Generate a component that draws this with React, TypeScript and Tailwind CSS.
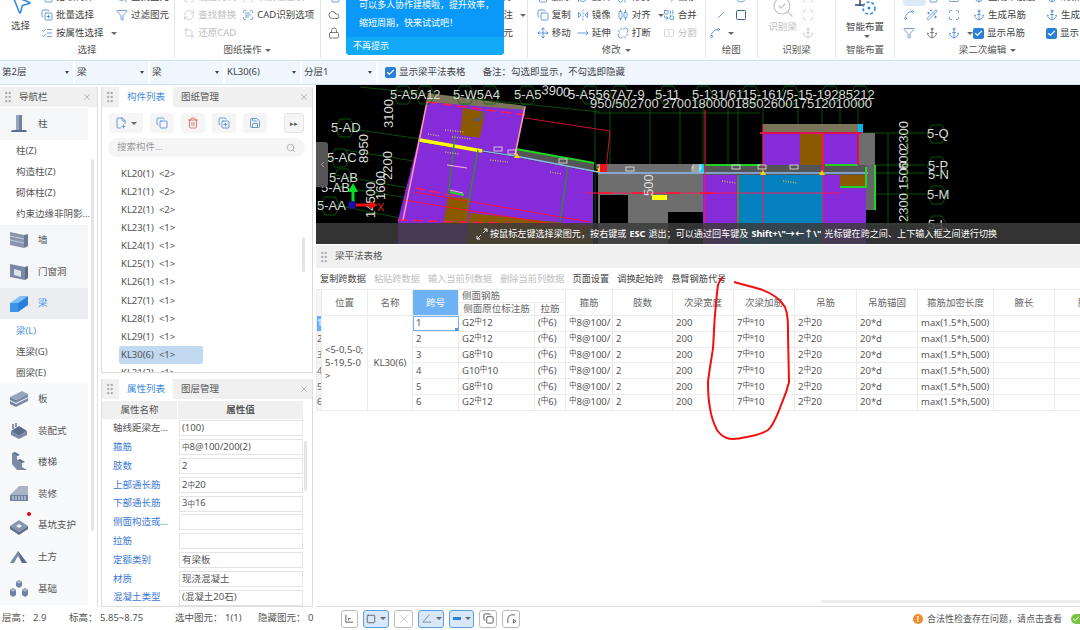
import type { ReactElement, ReactNode } from 'react';
import {
  AlignHorizontalDistributeCenter,
  ArrowLeftRight,
  Check,
  ChevronLeft,
  Circle,
  Cloud,
  Combine,
  Copy,
  CopyPlus,
  Crop,
  Filter,
  FlipHorizontal2,
  GripVertical,
  ListChecks,
  Lock,
  MousePointer2,
  Move,
  Scan,
  ScanText,
  Search,
  SearchCheck,
  Spline,
  Square,
  SquareSplitHorizontal,
  Trash2,
  Unlink,
  X,
  Save,
  FilePlus2,
  Minus,
  MoveRight,
  RefreshCw,
  Anchor,
  Wand2,
} from 'lucide-react';

const FONT = "font-['Noto_Sans','Noto_Sans_CJK_SC',sans-serif]";

function Rebar(): ReactElement {
  return <span className="align-[2px] text-[7.5px] leading-[8px]">中</span>;
}

function Caret(): ReactElement {
  return <span className="ml-1 inline-block h-0 w-0 border-x-[3px] border-t-[3px] border-x-transparent border-t-[#666]" />;
}

function Tool({ icon, label, off, caret }: { icon: ReactNode; label?: string; off?: boolean; caret?: boolean }): ReactElement {
  return (
    <div className={`flex h-[18px] items-center gap-[3px] whitespace-nowrap text-[9.5px] ${off ? 'text-[#bdbdbd]' : 'text-[#444]'}`}>
      {icon}
      {label}
      {caret ? <Caret /> : null}
    </div>
  );
}

function Group({ width, label, caret, children }: { width: string; label: string; caret?: boolean; children: ReactNode }): ReactElement {
  return (
    <div className={`flex h-[58px] flex-col border-r border-[#e6e6e6] ${width}`}>
      <div className="h-[43px] overflow-hidden">{children}</div>
      <div className="flex h-[15px] items-center justify-center text-[9.5px] text-[#555]">
        {label}
        {caret ? <Caret /> : null}
      </div>
    </div>
  );
}

const ic = 'h-[12px] w-[12px] shrink-0 stroke-[1.5] text-[#3f7fd0]';
const icOff = 'h-[12px] w-[12px] shrink-0 stroke-[1.5] text-[#c4c4c4]';

function Ribbon(): ReactElement {
  return (
    <div className="flex h-[60px] bg-white">
      <Group width="w-[176px]" label="选择">
        <div className="flex">
          <div className="flex w-[41px] flex-col items-center">
            <MousePointer2 className="-mt-[8px] ml-[1px] h-[24px] w-[24px] stroke-[1.5] text-[#2f86e0]" />
            <span className="mt-[3px] text-[9.5px] text-[#444]">选择</span>
          </div>
          <div className="-mt-[12px] w-[75px]">
            <Tool icon={<Copy className={ic} />} label="拾取构件" />
            <Tool icon={<CopyPlus className={ic} />} label="批量选择" />
            <Tool icon={<ListChecks className={ic} />} label="按属性选择" caret />
          </div>
          <div className="-mt-[12px]">
            <Tool icon={<Search className={ic} />} label="查找图元" />
            <Tool icon={<Filter className={ic} />} label="过滤图元" />
          </div>
        </div>
      </Group>
      <Group width="w-[146px]" label="图纸操作" caret>
        <div className="-mt-[12px] flex pl-2">
          <div className="w-[59px]">
            <Tool off icon={<Scan className={icOff} />} label="设置比例" />
            <Tool off icon={<RefreshCw className={icOff} />} label="查找替换" />
            <Tool off icon={<Crop className={icOff} />} label="还原CAD" />
          </div>
          <div>
            <Tool off icon={<Scan className={icOff} />} label="识别楼层表" />
            <Tool icon={<ScanText className={ic} />} label="CAD识别选项" />
          </div>
        </div>
      </Group>
      <Group width="w-[208px]" label="">
        <div className="-mt-[12px] flex pl-[7px]">
          <div className="w-[176px]">
            <Tool icon={<Copy className={ic} />} />
            <Tool icon={<Cloud className="h-[12px] w-[12px] stroke-[1.5] text-[#555]" />} />
            <Tool icon={<Lock className="h-[12px] w-[12px] stroke-[1.5] text-[#555]" />} />
          </div>
          <div>
            <Tool icon={null} label="除" />
            <Tool icon={null} label="注" caret />
            <Tool icon={null} label="元" />
          </div>
        </div>
      </Group>
      <Group width="w-[179px]" label="修改" caret>
        <div className="-mt-[12px] grid grid-cols-[40px_40px_46px_40px] pl-[9px]">
          <Tool icon={<Trash2 className={ic} />} label="删除" />
          <Tool icon={<RefreshCw className={ic} />} label="旋转" />
          <Tool icon={<Unlink className={ic} />} label="修剪" />
          <Tool icon={<ArrowLeftRight className={ic} />} label="偏移" />
          <Tool icon={<Copy className={ic} />} label="复制" />
          <Tool icon={<FlipHorizontal2 className={ic} />} label="镜像" />
          <Tool icon={<AlignHorizontalDistributeCenter className={ic} />} label="对齐" caret />
          <Tool icon={<Combine className={ic} />} label="合并" />
          <Tool icon={<Move className={ic} />} label="移动" />
          <Tool icon={<MoveRight className={ic} />} label="延伸" />
          <Tool icon={<Unlink className={ic} />} label="打断" />
          <Tool off icon={<SquareSplitHorizontal className={icOff} />} label="分割" />
        </div>
      </Group>
      <Group width="w-[52px]" label="绘图">
        <div className="-mt-[12px] grid grid-cols-2 justify-items-center px-[5px]">
          <Tool icon={<Minus className={`${ic} -rotate-45`} />} />
          <Tool icon={<Circle className={ic} />} />
          <Tool icon={<Minus className={`${ic} -rotate-45`} />} />
          <Tool icon={<Square className="h-[12px] w-[12px] stroke-[2] text-[#3a5f96]" />} />
          <Tool icon={<Spline className={ic} />} caret />
        </div>
      </Group>
      <Group width="w-[79px]" label="识别梁">
        <div className="flex pl-[6px]">
          <div className="flex w-[38px] flex-col items-center text-[9.5px] text-[#bdbdbd]">
            <SearchCheck className="-mt-[5px] h-[24px] w-[24px] stroke-[1.2] text-[#c4c4c4]" />
            <span className="mt-[1px]">识别梁</span>
          </div>
          <div className="-mt-[12px]">
            <Tool off icon={<Scan className={icOff} />} />
            <Tool off icon={<Scan className={icOff} />} />
            <Tool off icon={<Anchor className={icOff} />} />
          </div>
        </div>
      </Group>
      <Group width="w-[59px]" label="智能布置">
        <div className="flex flex-col items-center text-[9.5px] text-[#444]">
          <svg viewBox="0 0 24 24" className="-mt-[8px] h-[24px] w-[24px]" fill="none">
            <path d="M2 6h20M2 13h9M7 1v13M15 1v7" stroke="#3a4a66" strokeWidth="1.5" />
            <circle cx="16" cy="16" r="6" stroke="#2f86e0" strokeWidth="1.5" strokeDasharray="3 2" />
            <circle cx="16" cy="16" r="1.5" fill="#2f86e0" />
          </svg>
          <span className="mt-[2px] leading-[17px]">智能布置</span>
          <Caret />
        </div>
      </Group>
      <Group width="flex-1 border-r-0" label="梁二次编辑" caret>
        <div className="-mt-[12px] flex pl-[8px]">
          <div className="grid w-[68px] grid-cols-3">
            <div className="h-[18px] w-[23px] rounded-sm bg-[#dce9f7]" />
            <Tool icon={<Copy className={ic} />} />
            <Tool icon={<Square className={ic} />} />
            <Tool icon={<Spline className={ic} />} />
            <Tool icon={<Wand2 className={ic} />} />
            <Tool icon={<Scan className={ic} />} />
            <Tool icon={<Filter className={ic} />} />
            <Tool icon={<Anchor className="h-[12px] w-[12px] stroke-[1.5] text-[#555]" />} />
            <Tool icon={<Anchor className={ic} />} caret />
          </div>
          <div className="w-[75px] pl-[2px]">
            <Tool icon={<Anchor className={ic} />} label="生成吊筋筋" />
            <Tool icon={<Anchor className={ic} />} label="生成吊筋" />
            <CheckLabel label="显示吊筋" />
          </div>
          <div>
            <Tool icon={<Anchor className={ic} />} label="刷新" />
            <Tool icon={<Anchor className={ic} />} label="生成" />
            <CheckLabel label="显示" />
          </div>
        </div>
      </Group>
    </div>
  );
}

function CheckLabel({ label }: { label: string }): ReactElement {
  return (
    <div className="flex h-[18px] items-center gap-[3px] whitespace-nowrap text-[9.5px] text-[#444]">
      <span className="flex h-[11px] w-[11px] items-center justify-center rounded-[2px] bg-[#2a7fd8]">
        <Check className="h-[9px] w-[9px] stroke-[3] text-white" />
      </span>
      {label}
    </div>
  );
}

function Dropdown({ value, width }: { value: string; width: string }): ReactElement {
  return (
    <div className={`flex h-full items-center justify-between border-r-2 border-white pl-[2px] pr-[4px] text-[9.5px] text-[#444] ${width}`}>
      {value}
      <span className="h-0 w-0 border-x-[2.5px] border-t-[3px] border-x-transparent border-t-[#444]" />
    </div>
  );
}

function OptionBar(): ReactElement {
  return (
    <div className="flex h-[25px] items-center border-y border-[#cfe2f3] bg-[#eff7fd]">
      <Dropdown value="第2层" width="w-[75px]" />
      <Dropdown value="梁" width="w-[75px]" />
      <Dropdown value="梁" width="w-[75px]" />
      <Dropdown value="KL30(6)" width="w-[77px]" />
      <Dropdown value="分层1" width="w-[76px]" />
      <div className="ml-[7px]">
        <CheckLabel label="显示梁平法表格" />
      </div>
      <span className="ml-[17px] text-[9.5px] text-[#444]">备注：勾选即显示，不勾选即隐藏</span>
    </div>
  );
}

function PanelHead({ tabs }: { tabs: string[] }): ReactElement {
  return (
    <div className="flex h-[20px] items-center bg-[#f0f0f0] text-[9.5px]">
      <GripVertical className="ml-[1px] h-[14px] w-[14px] text-[#aaa]" />
      <div className="ml-[2px] flex h-full">
        {tabs.map((tab, i) => (
          <span key={tab} className={`flex items-center px-[8px] ${i === 0 ? 'bg-white text-[#3f8be0]' : 'text-[#555]'}`}>
            {tab}
          </span>
        ))}
      </div>
      <X className="ml-auto mr-[3px] h-[10px] w-[10px] text-[#aaa]" />
    </div>
  );
}

function PillarIcon(): ReactElement {
  return (
    <svg viewBox="0 0 20 20" className="h-[20px] w-[20px]">
      <path d="M7 1h6v15H7z" fill="#6f82a3" />
      <path d="M7 1h3v15H7z" fill="#97a6bf" />
      <path d="M3 16h14l1 2H2z" fill="#5b6d8f" />
    </svg>
  );
}

function WallIcon(): ReactElement {
  return (
    <svg viewBox="0 0 20 20" className="h-[20px] w-[20px]">
      <path d="M1 2l14 3v13L1 15z" fill="#8895ad" />
      <path d="M15 5l4-1v12l-4 2z" fill="#6c7a95" />
      <path d="M1 6l14 3M1 10l14 3" stroke="#c7cedb" strokeWidth="1" />
    </svg>
  );
}

function DoorIcon(): ReactElement {
  return (
    <svg viewBox="0 0 20 20" className="h-[20px] w-[20px]">
      <path d="M1 2l15 3v13L1 15z" fill="#7b89a4" />
      <path d="M5 7l7 2v6l-7-2z" fill="#dfe3ea" />
      <path d="M16 5l3-1v12l-3 2z" fill="#5f6e8b" />
    </svg>
  );
}

function BeamIcon(): ReactElement {
  return (
    <svg viewBox="0 0 20 20" className="h-[20px] w-[20px]">
      <path d="M1 9l10-7h8L9 9z" fill="#7fc0f5" />
      <path d="M1 9h8v9H1z" fill="#3d94ea" />
      <path d="M9 9l10-7v9L9 18z" fill="#2a7fd8" />
    </svg>
  );
}

function SlabIcon(): ReactElement {
  return (
    <svg viewBox="0 0 20 20" className="h-[20px] w-[20px]">
      <path d="M1 8l12-6 6 3-12 6z" fill="#97a6bf" />
      <path d="M1 8l6 3v3l-6-3zM1 12l6 3v3l-6-3z" fill="#6f82a3" />
      <path d="M7 11l12-6v3L7 14zM7 15l12-6v3L7 18z" fill="#7b89a4" />
    </svg>
  );
}

function PrefabIcon(): ReactElement {
  return (
    <svg viewBox="0 0 20 20" className="h-[20px] w-[20px]">
      <path d="M2 10l8-5 8 5-8 5z" fill="#5b6d8f" />
      <path d="M2 10l8 5v3l-8-4zM18 10l-8 5v3l8-4z" fill="#7b89a4" />
      <path d="M4 3v5M7 2v4" stroke="#8895ad" strokeWidth="2" />
    </svg>
  );
}

function StairIcon(): ReactElement {
  return (
    <svg viewBox="0 0 20 20" className="h-[20px] w-[20px]">
      <path d="M3 1l5 3v4l5 3v4l5 3H8L3 12z" fill="#7b89a4" />
      <path d="M3 1l3-1 5 3-3 1zM8 8l3-1 5 3-3 1z" fill="#5b6d8f" />
    </svg>
  );
}

function FinishIcon(): ReactElement {
  return (
    <svg viewBox="0 0 20 20" className="h-[20px] w-[20px]">
      <path d="M1 11L10 2h9v9z" fill="#aab4c7" />
      <path d="M1 11h18v6H1z" fill="#6f82a3" />
      <path d="M3 13h14M3 15h14" stroke="#dfe3ea" strokeDasharray="2 1" />
    </svg>
  );
}

function PitIcon(): ReactElement {
  return (
    <svg viewBox="0 0 20 20" className="h-[20px] w-[20px]">
      <path d="M1 10l9-6 9 6-9 6z" fill="#8895ad" />
      <path d="M7 10l3-2 3 2-3 2z" fill="#eef0f4" />
      <path d="M1 10l9 6v3l-9-6zM19 10l-9 6v3l9-6z" fill="#5f6e8b" />
    </svg>
  );
}

function EarthIcon(): ReactElement {
  return (
    <svg viewBox="0 0 20 20" className="h-[20px] w-[20px]">
      <path d="M1 16L9 4l9 12h-5L9 9l-4 7z" fill="#7b89a4" />
      <path d="M9 4l9 12h-5z" fill="#5b6d8f" />
    </svg>
  );
}

function FoundationIcon(): ReactElement {
  return (
    <svg viewBox="0 0 20 20" className="h-[20px] w-[20px]">
      <path d="M7 3l3-2 3 2v4l-3 2-3-2zM1 11l3-2 3 2v5l-3 2-3-2zM13 11l3-2 3 2v5l-3 2-3-2z" fill="#6f82a3" />
      <path d="M7 3l3 2 3-2-3-2zM1 11l3 2 3-2-3-2zM13 11l3 2 3-2-3-2z" fill="#a3aec3" />
    </svg>
  );
}

function NavRow({ icon, label, tone, active, dot }: { icon: ReactNode; label: string; tone?: string; active?: boolean; dot?: boolean }): ReactElement {
  return (
    <div className={`relative flex h-[31.6px] w-[88px] items-center text-[9.5px] ${tone ?? ''} ${active ? 'text-[#4d94e8]' : 'text-[#555]'}`}>
      <span className="flex w-[38px] justify-center">{icon}</span>
      {label}
      {dot ? <span className="absolute left-[27px] top-[2px] h-[4px] w-[4px] rounded-full bg-red-600" /> : null}
    </div>
  );
}

function NavSub({ label, active }: { label: string; active?: boolean }): ReactElement {
  return (
    <div className={`flex h-[21px] items-center whitespace-nowrap pl-[16px] text-[9.5px] ${active ? 'text-[#4d94e8]' : 'text-[#555]'}`}>
      {label}
    </div>
  );
}

function NavPanel(): ReactElement {
  return (
    <div className="relative flex w-[98px] shrink-0 flex-col overflow-hidden border-r border-[#ddd]">
      <div className="mb-[1px] flex h-[20px] items-center bg-[#f0f0f0] text-[9.5px] text-[#555]">
        <GripVertical className="ml-[1px] h-[14px] w-[14px] text-[#aaa]" />
        <span className="ml-[4px]">导航栏</span>
        <X className="ml-auto mr-[5px] h-[10px] w-[10px] text-[#aaa]" />
      </div>
      <NavRow icon={<PillarIcon />} label="柱" tone="bg-[#f5f6f8]" />
      <div className="h-[1px]" />
      <NavSub label="柱(Z)" />
      <NavSub label="构造柱(Z)" />
      <NavSub label="砌体柱(Z)" />
      <NavSub label="约束边缘非阴影..." />
      <NavRow icon={<WallIcon />} label="墙" tone="bg-[#f5f6f8]" />
      <NavRow icon={<DoorIcon />} label="门窗洞" tone="bg-[#f5f6f8]" />
      <NavRow icon={<BeamIcon />} label="梁" tone="bg-[#ebedf1]" active />
      <div className="h-[1px]" />
      <NavSub label="梁(L)" active />
      <NavSub label="连梁(G)" />
      <NavSub label="圈梁(E)" />
      <NavRow icon={<SlabIcon />} label="板" tone="bg-[#f8f9fa]" />
      <NavRow icon={<PrefabIcon />} label="装配式" tone="bg-[#f8f9fa]" />
      <NavRow icon={<StairIcon />} label="楼梯" tone="bg-[#f8f9fa]" />
      <NavRow icon={<FinishIcon />} label="装修" tone="bg-[#f8f9fa]" />
      <NavRow icon={<PitIcon />} label="基坑支护" tone="bg-[#f8f9fa]" dot />
      <NavRow icon={<EarthIcon />} label="土方" tone="bg-[#f8f9fa]" />
      <NavRow icon={<FoundationIcon />} label="基础" tone="bg-[#f8f9fa]" />
      <div className="absolute left-[91px] top-[72px] h-[372px] w-[3px] rounded-full bg-[#e4e4e4]" />
    </div>
  );
}

function IconBtn({ children, width }: { children: ReactNode; width: string }): ReactElement {
  return <div className={`flex h-[20px] items-center justify-center rounded-[3px] bg-[#f5f5f5] ${width}`}>{children}</div>;
}

const COMPONENTS = [
  ['KL20(1)', '<2>'],
  ['KL21(1)', '<2>'],
  ['KL22(1)', '<2>'],
  ['KL23(1)', '<1>'],
  ['KL24(1)', '<1>'],
  ['KL25(1)', '<1>'],
  ['KL26(1)', '<1>'],
  ['KL27(1)', '<1>'],
  ['KL28(1)', '<1>'],
  ['KL29(1)', '<1>'],
  ['KL30(6)', '<1>'],
  ['KL31(2)', '<1>'],
];

function ComponentPanel(): ReactElement {
  return (
    <div className="relative h-[286px] overflow-hidden border border-t-0 border-[#ddd] bg-white">
      <PanelHead tabs={['构件列表', '图纸管理']} />
      <div className="flex items-center gap-[7px] pl-[7px] pt-[6px]">
        <IconBtn width="w-[34px]">
          <FilePlus2 className={ic} />
          <Caret />
        </IconBtn>
        <IconBtn width="w-[24px]"><Copy className={ic} /></IconBtn>
        <IconBtn width="w-[24px]"><Trash2 className="h-[12px] w-[12px] stroke-[1.5] text-[#d9534f]" /></IconBtn>
        <IconBtn width="w-[24px]"><CopyPlus className={ic} /></IconBtn>
        <IconBtn width="w-[24px]"><Save className={ic} /></IconBtn>
        <div className="ml-[10px] flex h-[20px] w-[20px] items-center justify-center rounded-[3px] border border-[#e4e4e4] bg-[#f5f5f5] text-[7px] leading-none text-[#555]">
          ▸▸
        </div>
      </div>
      <div className="ml-[6px] mt-[5px] flex h-[19px] w-[197px] items-center justify-between rounded-full bg-[#f5f5f5] px-[9px] text-[9.5px] text-[#999]">
        搜索构件...
        <Search className="h-[10px] w-[10px] text-[#aaa]" />
      </div>
      <div className="ml-[17px] mt-[8px]">
        {COMPONENTS.map(([name, floor]) => (
          <div
            key={name}
            className={`flex h-[18.1px] w-[84px] items-center gap-[5px] whitespace-nowrap rounded-[2px] pl-[2px] text-[9.5px] text-[#555] ${name === 'KL30(6)' ? 'bg-[#c0d8f0]' : ''}`}
          >
            <span>{name}</span>
            <span>{floor}</span>
          </div>
        ))}
      </div>
      <div className="absolute right-[7px] top-[150px] h-[35px] w-[3px] rounded-full bg-[#e4e4e4]" />
    </div>
  );
}

const PROPS: { name: string; value: ReactNode; link?: boolean }[] = [
  { name: '轴线距梁左...', value: '(100)' },
  { name: '箍筋', value: <><Rebar />8@100/200(2)</>, link: true },
  { name: '肢数', value: '2', link: true },
  { name: '上部通长筋', value: <>2<Rebar />20</>, link: true },
  { name: '下部通长筋', value: <>3<Rebar />16</>, link: true },
  { name: '侧面构造或...', value: '', link: true },
  { name: '拉筋', value: '', link: true },
  { name: '定额类别', value: '有梁板', link: true },
  { name: '材质', value: '现浇混凝土', link: true },
  { name: '混凝土类型', value: '(混凝土20石)', link: true },
];

function PropertyPanel(): ReactElement {
  return (
    <div className="relative mt-[6px] flex-1 overflow-hidden border border-[#ddd] border-t-0 bg-white">
      <PanelHead tabs={['属性列表', '图层管理']} />
      <div className="mt-[2px] flex h-[18px] w-[201px] bg-[#f0f0f0] text-[9.5px] text-[#555]">
        <span className="flex w-[76px] items-center justify-center border-r border-white">属性名称</span>
        <span className="flex flex-1 items-center justify-center font-bold">属性值</span>
      </div>
      {PROPS.map((prop) => (
        <div key={prop.name} className="flex h-[18.8px] w-[201px] items-center text-[9.5px]">
          <span className={`w-[77px] whitespace-nowrap pl-[11px] ${prop.link ? 'text-[#3a78d8]' : 'text-[#555]'}`}>{prop.name}</span>
          <span className="flex h-[16px] flex-1 items-center border border-[#e4e4e4] pl-[2px] text-[#555]">{prop.value}</span>
        </div>
      ))}
      <div className="absolute right-[5px] top-[62px] h-[50px] w-[3px] rounded-full bg-[#e4e4e4]" />
    </div>
  );
}

const CAD_FONT = 'Liberation Sans, sans-serif';

function Axis({ x, y, label, hexes = [] }: { x: number; y: number; label: string; hexes?: number[] }): ReactElement {
  return (
    <g>
      {hexes.map((cx) => (
        <path
          key={cx}
          d={`M${cx - 10} ${y - 4}l5 -9h10l5 9l-5 9h-10z`}
          fill="none"
          stroke="#0a6a0a"
          strokeWidth="0.8"
        />
      ))}
      <text x={x} y={y} fill="#d8d8d8" fontSize={13} fontFamily={CAD_FONT}>
        {label}
      </text>
    </g>
  );
}

function Dim({ x, y, label }: { x: number; y: number; label: string }): ReactElement {
  return (
    <text transform={`translate(${x} ${y}) rotate(-90)`} fill="#ddd" fontSize="13" fontFamily={CAD_FONT}>
      {label}
    </text>
  );
}

const V_GRID = [437, 462, 490, 515, 595, 610, 650, 680, 703, 728, 738, 763, 798, 822, 840, 858];
const H_GRID = [133, 165, 173, 194, 224];
const WHITE_BOXES: [number, number][] = [[494, 147], [508, 150], [559, 159], [597, 165], [626, 167], [692, 167], [693, 165], [732, 165], [758, 165], [790, 165]];
const SPECKS: [number, number, number][] = [[428, 134, 12], [445, 130, 20], [452, 137, 20], [445, 152, 14], [490, 160, 18], [550, 172, 12], [722, 181, 14], [783, 181, 14]];

function CadCanvas(): ReactElement {
  return (
    <div className="relative h-[159px] overflow-hidden bg-black">
      <svg viewBox="316 85 764 159" className="h-[159px] w-[764px]">
        {V_GRID.map((x) => (
          <line key={x} x1={x} y1={105} x2={x} y2={244} stroke="#0a5f0a" strokeWidth="0.8" />
        ))}
        {H_GRID.map((y) => (
          <line key={y} x1={763} y1={y} x2={925} y2={y} stroke="#0a6a0a" strokeWidth="0.8" />
        ))}
        <path d="M360 87L600 112M345 128L600 165M345 150L420 162M335 175L420 190M335 186L420 200M335 205L400 218M595 113H760" stroke="#0a5f0a" strokeWidth="0.8" />
        <path d="M525 118L610 131L606 170M414 200L590 230M404 190L590 222" stroke="#e01030" fill="none" strokeWidth="0.9" />
        <path d="M428 93L526 106L524 112L426 102Z" fill="#7a7558" />
        <path d="M427 102L525 110L515 155L418 141Z" fill="#852bd9" />
        <path d="M463 108L485 112L480 138L460 135Z" fill="#8a5a00" />
        <path d="M418 142L515 157L593 172V244H398L398 220Z" fill="#852bd9" />
        <path d="M448 197L470 198L467 224L443 224Z" fill="#8a5a00" />
        <path d="M470 213L592 226V244H465Z" fill="#8a5a00" />
        <path d="M515 149L594 164V172L515 157Z" fill="#555" />
        <path d="M516 149L594 163" stroke="#22d322" strokeWidth="2" />
        <path d="M418 141L515 156L598 172" stroke="#8fb8f5" strokeWidth="1.5" fill="none" />
        <path d="M420 140L482 151" stroke="#ffff00" strokeWidth="3.5" />
        <path d="M427 102L525 115M415 188L460 197M398 220L590 226" stroke="#ff1a55" strokeWidth="1.5" strokeDasharray="10 5" fill="none" />
        <path d="M414 192L590 222M404 200L590 230" stroke="#ff1030" strokeWidth="0.9" />
        <path d="M427 102L403 220" stroke="#ff9aa8" strokeWidth="1.5" />
        <path d="M525 107L515 155" stroke="#ff9aa8" strokeWidth="1.5" />
        <path d="M455 135L448 197M478 150L468 205M568 167L560 222" stroke="#2e8b2e" strokeWidth="1.5" />
        <path d="M483 112L479 120H474" stroke="#3a56d0" strokeWidth="1.5" fill="none" />
        <path d="M447 165L467 168M450 190L463 193" stroke="#ffb0e0" strokeWidth="1.2" />
        <path d="M450 192L464 195" stroke="#22d322" strokeWidth="2" />
        <rect x="598" y="164" width="105" height="80" fill="#6e6e6e" />
        <rect x="600" y="195" width="28" height="28" fill="#000" />
        <rect x="668" y="212" width="36" height="32" fill="#000" />
        <rect x="652" y="195" width="15" height="5" fill="#ffff00" />
        <rect x="703" y="175" width="35" height="69" fill="#852bd9" />
        <rect x="738" y="175" width="85" height="69" fill="#0581c0" />
        <rect x="823" y="175" width="43" height="69" fill="#852bd9" />
        <rect x="763" y="124" width="100" height="10" fill="#7a7558" />
        <rect x="858" y="124" width="5" height="10" fill="#00b4f0" />
        <rect x="763" y="133" width="37" height="32" fill="#852bd9" />
        <rect x="800" y="133" width="22" height="32" fill="#8a5a00" />
        <rect x="823" y="133" width="35" height="32" fill="#852bd9" />
        <rect x="858" y="133" width="17" height="32" fill="#6e6e6e" />
        <rect x="840" y="167" width="27" height="20" fill="#8a5a00" />
        <rect x="866" y="165" width="10" height="45" fill="#666" />
        <rect x="703" y="164" width="60" height="11" fill="#555" />
        <rect x="763" y="165" width="103" height="10" fill="#555" />
        <rect x="699" y="164" width="5" height="9" fill="#00d8f0" />
        <path d="M598 173H868" stroke="#8fb8f5" strokeWidth="1.6" />
        <path d="M705 165H760M825 165H858" stroke="#22d322" strokeWidth="2" />
        <path d="M875 165V210M840 187H866V167" stroke="#22d322" strokeWidth="2" fill="none" />
        <path d="M760 133H862M823 133V175M858 133V165" stroke="#e01050" strokeWidth="2" fill="none" />
        <path d="M585 193H840" stroke="#ff1a55" strokeWidth="1" />
        <path d="M705 110V244M763 124V244M823 133V244" stroke="#ff1a55" strokeWidth="1" />
        <path d="M598 193H715" stroke="#ff1030" strokeWidth="1.5" strokeDasharray="14 20" />
        <path d="M738 175V240" stroke="#7a8a00" strokeWidth="1.5" />
        {WHITE_BOXES.map(([x, y]) => (
          <rect key={`${x}-${y}`} x={x} y={y} width="8" height="4" fill="none" stroke="#e8e8e8" strokeWidth="0.8" />
        ))}
        {SPECKS.map(([x, y, w]) => (
          <line key={`${x}-${y}`} x1={x} y1={y} x2={x + w} y2={y + 2} stroke="#c8c060" strokeWidth="1.4" strokeDasharray="1 1.5" />
        ))}
        <path d="M597 172l3-7 3 7zM514 158l3-5 3 5zM760 175l3-5 3 5zM819 175l3-5 3 5z" fill="#ffd000" />
        <rect x="600" y="164" width="7" height="8" fill="#f01020" />
        <Dim x={653} y={196} label="500" />
        <Axis x={390} y={99} label="5-A5A12" hexes={[403, 425]} />
        <Axis x={453} y={99} label="5-W5A4" hexes={[465, 490]} />
        <Axis x={514} y={99} label="5-A5" hexes={[527]} />
        <text transform="translate(541 94) rotate(6)" fill="#d8d8d8" fontSize="13" fontFamily={CAD_FONT}>3900</text>
        <Axis x={568} y={99} label="5-A5567A7-9" hexes={[590, 620]} />
        <Axis x={655} y={99} label="5-11" hexes={[668]} />
        <Axis x={692} y={99} label="5-13" hexes={[703]} />
        <Axis x={718} y={99} label="1/6115-161/5-15-19285212" hexes={[750, 790, 830, 860]} />
        <text x="590" y="108" fill="#d8d8d8" fontSize="13" fontFamily={CAD_FONT}>950/502700 27001800001850260017512010000</text>
        <Dim x={393} y={128} label="3100" />
        <Dim x={368} y={163} label="8950" />
        <Dim x={392} y={180} label="2200" />
        <Dim x={385} y={200} label="1600" />
        <Dim x={375} y={218} label="14500" />
        <Axis x={331} y={132} label="5-AD" hexes={[345]} />
        <Axis x={327} y={162} label="5-AC" hexes={[340]} />
        <Axis x={329} y={182} label="5-AB" hexes={[343]} />
        <Axis x={321} y={192} label="5-AB" />
        <Axis x={317} y={210} label="5-AA" hexes={[330]} />
        <path d="M353 205V190" stroke="#00e020" strokeWidth="3" />
        <path d="M348 192l5-9 5 9z" fill="#00e020" />
        <path d="M353 205H372" stroke="#f01010" strokeWidth="3" />
        <path d="M370 201l8 4-8 4z" fill="#f01010" />
        <circle cx="352" cy="205" r="4" fill="#1414a0" />
        <text x="377" y="211" fill="#e02020" fontSize="11" fontFamily={CAD_FONT}>X</text>
        <Dim x={908} y={190} label="1500" />
        <Dim x={908} y={150} label="2300" />
        <Dim x={908} y={222} label="2300" />
        <Dim x={908} y={170} label="600" />
        <path d="M888 133V235M907 133V235" stroke="#0a6a0a" strokeWidth="0.8" />
        <Axis x={927} y={138} label="5-Q" hexes={[937]} />
        <Axis x={928} y={170} label="5-P" hexes={[937]} />
        <Axis x={928} y={179} label="5-N" />
        <Axis x={927} y={199} label="5-M" hexes={[937]} />
        <Axis x={928} y={229} label="5-L" hexes={[937]} />
      </svg>
      <div className="absolute left-0 top-[57px] flex h-[45px] w-[12px] items-center justify-center rounded-r-[3px] bg-[#555]">
        <ChevronLeft className="h-[9px] w-[9px] text-[#bbb]" />
      </div>
      <div className="absolute inset-x-0 bottom-0 flex h-[21px] items-center bg-[#3c3c3c]/85 pl-[160px] text-[9.1px] text-white">
        <svg viewBox="0 0 12 12" className="mr-[2px] h-[12px] w-[12px]" fill="none" stroke="#fff" strokeWidth="1">
          <path d="M1 11L5 7M1 8v3h3M11 1L7 5M11 4V1H8" />
        </svg>
        按鼠标左键选择梁图元，按右键或 <b className="mx-[3px]">ESC</b> 退出；可以通过回车键及 <b className="mx-[3px]">Shift+\"→←↑\"</b> 光标键在跨之间、上下输入框之间进行切换
      </div>
    </div>
  );
}

const SPANS: { side: ReactNode; n: string }[] = [
  { side: <>G2<Rebar />12</>, n: '1' },
  { side: <>G2<Rebar />12</>, n: '2' },
  { side: <>G8<Rebar />10</>, n: '3' },
  { side: <>G10<Rebar />10</>, n: '4' },
  { side: <>G8<Rebar />10</>, n: '5' },
  { side: <>G2<Rebar />12</>, n: '6' },
];

const td = 'overflow-hidden whitespace-nowrap border border-[#ececec] px-[3px] text-left';
const th = 'border border-[#ececec] font-normal text-[#666]';
const COL_WIDTHS = ['w-[5px]', 'w-[46px]', 'w-[45px]', 'w-[46px]', 'w-[76px]', 'w-[31px]', 'w-[47px]', 'w-[60px]', 'w-[61px]', 'w-[61px]', 'w-[62px]', 'w-[61px]', 'w-[76px]', 'w-[61px]', 'w-[66px]'];

function BeamTable(): ReactElement {
  return (
    <div className="relative mt-[1px] flex-1 overflow-hidden border-b border-[#ddd] bg-white">
      <div className="flex h-[23px] items-center bg-[#f0f0f0] text-[9.5px] text-[#555]">
        <GripVertical className="ml-[1px] h-[14px] w-[14px] text-[#aaa]" />
        <span className="ml-[4px]">梁平法表格</span>
      </div>
      <div className="flex h-[21px] items-center gap-[8px] pl-[4px] text-[9.2px] text-[#444]">
        <span>复制跨数据</span>
        <span className="text-[#bdbdbd]">粘贴跨数据</span>
        <span className="text-[#bdbdbd]">输入当前列数据</span>
        <span className="text-[#bdbdbd]">删除当前列数据</span>
        <span>页面设置</span>
        <span>调换起始跨</span>
        <span>悬臂钢筋代号</span>
      </div>
      <table className="w-[804px] table-fixed border-collapse text-[9.5px] text-[#555]">
        <colgroup>
          {COL_WIDTHS.map((w, i) => (
            <col key={i} className={w} />
          ))}
        </colgroup>
        <thead>
          <tr className="h-[13px] leading-[12px]">
            <th rowSpan={2} className="border border-[#ececec] bg-[#f5f5f5]" />
            <th rowSpan={2} className={th}>位置</th>
            <th rowSpan={2} className={th}>名称</th>
            <th rowSpan={2} className="border border-[#ececec] bg-[#6eb1f5] font-normal text-white">跨号</th>
            <th colSpan={2} className={`${th} pl-[3px] text-left`}>侧面钢筋</th>
            <th rowSpan={2} className={th}>箍筋</th>
            <th rowSpan={2} className={th}>肢数</th>
            <th rowSpan={2} className={th}>次梁宽度</th>
            <th rowSpan={2} className={th}>次梁加筋</th>
            <th rowSpan={2} className={th}>吊筋</th>
            <th rowSpan={2} className={th}>吊筋锚固</th>
            <th rowSpan={2} className={th}>箍筋加密长度</th>
            <th rowSpan={2} className={th}>腋长</th>
            <th rowSpan={2} className={th}>腋高</th>
          </tr>
          <tr className="h-[12px] leading-[12px]">
            <th className={th}>侧面原位标注筋</th>
            <th className={th}>拉筋</th>
          </tr>
        </thead>
        <tbody>
          {SPANS.map((span, i) => (
            <tr key={span.n} className="h-[15.8px] leading-[12px]">
              <td className={`overflow-hidden border border-[#ececec] ${i === 0 ? 'bg-[#6eb1f5] text-white' : 'bg-[#f5f5f5] text-[#666]'}`}>{span.n}</td>
              {i === 0 ? (
                <>
                  <td rowSpan={6} className="border border-[#ececec] pl-[3px] text-left leading-[13px]">&lt;5-0,5-0;<br />5-19,5-0<br />&gt;</td>
                  <td rowSpan={6} className="border border-[#ececec] text-center">KL30(6)</td>
                </>
              ) : null}
              <td className={`${td} relative ${i === 0 ? 'outline outline-1 -outline-offset-1 outline-[#6eb1f5]' : ''}`}>
                {span.n}
                {i === 0 ? <span className="absolute bottom-0 right-0 h-[3px] w-[3px] bg-[#4d94e8]" /> : null}
              </td>
              <td className={td}>{span.side}</td>
              <td className={td}>(<Rebar />6)</td>
              <td className={td}><Rebar />8@100/</td>
              <td className={td}>2</td>
              <td className={td}>200</td>
              <td className={td}>7<Rebar /><span className="align-[3px] text-[6px] leading-[6px]">R</span>10</td>
              <td className={td}>2<Rebar />20</td>
              <td className={td}>20*d</td>
              <td className={td}>max(1.5*h,500)</td>
              <td className={td} />
              <td className={td} />
            </tr>
          ))}
        </tbody>
      </table>
      <div className="absolute bottom-[3px] right-0 h-[3px] w-[300px] bg-[#ececec]" />
    </div>
  );
}

function StatusBtn({ children, on, width }: { children: ReactNode; on?: boolean; width: string }): ReactElement {
  return (
    <div className={`flex h-[18px] items-center justify-center rounded-[3px] border ${on ? 'border-[#5a9ee8] bg-[#d8e8f8]' : 'border-[#bbb] bg-white'} ${width}`}>
      {children}
    </div>
  );
}

function StatusBar(): ReactElement {
  return (
    <div className="flex h-[23px] items-center text-[9.5px] text-[#555]">
      <span className="ml-[2px] w-[67px]">层高： 2.9</span>
      <span className="w-[106px]">标高： 5.85~8.75</span>
      <span className="w-[83px]">选中图元： 1(1)</span>
      <span className="w-[83px]">隐藏图元： 0</span>
      <div className="flex gap-[5px]">
        <StatusBtn width="w-[17px]">
          <svg viewBox="0 0 12 12" className="h-[11px] w-[11px]" fill="none" stroke="#555"><path d="M2 2v8h8M5 8V6h2" /></svg>
        </StatusBtn>
        <StatusBtn on width="w-[26px]">
          <Square className="h-[10px] w-[10px] text-[#555]" />
          <Caret />
        </StatusBtn>
        <StatusBtn width="w-[19px]">
          <X className="h-[14px] w-[14px] stroke-[1] text-[#aaa]" />
        </StatusBtn>
        <StatusBtn on width="w-[26px]">
          <svg viewBox="0 0 12 12" className="h-[11px] w-[11px]" fill="none" stroke="#888"><path d="M9 2L2 10h9" /></svg>
          <Caret />
        </StatusBtn>
        <StatusBtn on width="w-[25px]">
          <span className="h-[3px] w-[8px] bg-[#2a7fd8]" />
          <Caret />
        </StatusBtn>
        <StatusBtn width="w-[18px]">
          <Copy className="h-[11px] w-[11px] text-[#555]" />
        </StatusBtn>
        <StatusBtn width="w-[18px]">
          <svg viewBox="0 0 12 12" className="h-[11px] w-[11px]" fill="none" stroke="#555"><path d="M2 11V6q0-3 4-4h4M8 7l3 2-3 2z" /></svg>
        </StatusBtn>
      </div>
      <span className="ml-auto flex h-[10px] w-[10px] items-center justify-center rounded-full bg-[#f28c28] text-[8px] font-bold leading-none text-white">!</span>
      <span className="ml-[4px] text-[9px]">合法性检查存在问题，请点击查看</span>
      <span className="ml-[9px] flex h-[10px] w-[9px] items-center justify-center rounded-l-full bg-[#76c442]">
        <Check className="h-[8px] w-[8px] stroke-[3] text-white" />
      </span>
    </div>
  );
}

export default function App(): ReactElement {
  return (
    <div className={`relative flex h-[630px] w-[1080px] flex-col overflow-hidden bg-white ${FONT}`}>
      <Ribbon />
      <OptionBar />
      <div className="flex h-[522px] gap-[3px]">
        <div className="mt-[2px] flex">
          <NavPanel />
        </div>
        <div className="mt-[2px] flex w-[212px] shrink-0 flex-col">
          <ComponentPanel />
          <PropertyPanel />
        </div>
        <div className="flex flex-1 flex-col">
          <CadCanvas />
          <BeamTable />
        </div>
      </div>
      <StatusBar />

      <div className="absolute left-[346px] top-0 h-[55px] w-[158px] overflow-hidden rounded-b-[4px] bg-[#0a99f8] text-[9px] text-white">
        <p className="-mt-[4px] whitespace-nowrap pl-[13px] leading-[18px]">可以多人协作建模啦，提升效率，</p>
        <p className="whitespace-nowrap pl-[13px] leading-[18px]">缩短周期，快来试试吧！</p>
        <p className="mt-[5px] flex h-[18px] items-center bg-[#12a9f7] pl-[7px]">不再提示</p>
      </div>

      <svg viewBox="0 0 1080 630" className="pointer-events-none absolute inset-0 h-[630px] w-[1080px]" fill="none">
        <path
          d="M734 282C745 285 752 287 760 289C772 293 781 300 785 307C788 315 788 322 788 335L789 382C786 395 782 402 780 408C776 418 773 426 768 430C760 435 754 436 747 437C738 439 731 440 727 438C721 436 719 433 717 430C713 422 711 416 710 408C708 398 708 390 708 382C710 365 712 356 713 348C714 335 714 325 715 315C716 303 717 292 718 285C719 281 721 279 723 277"
          stroke="#f01010"
          strokeWidth="2"
        />
      </svg>
    </div>
  );
}
